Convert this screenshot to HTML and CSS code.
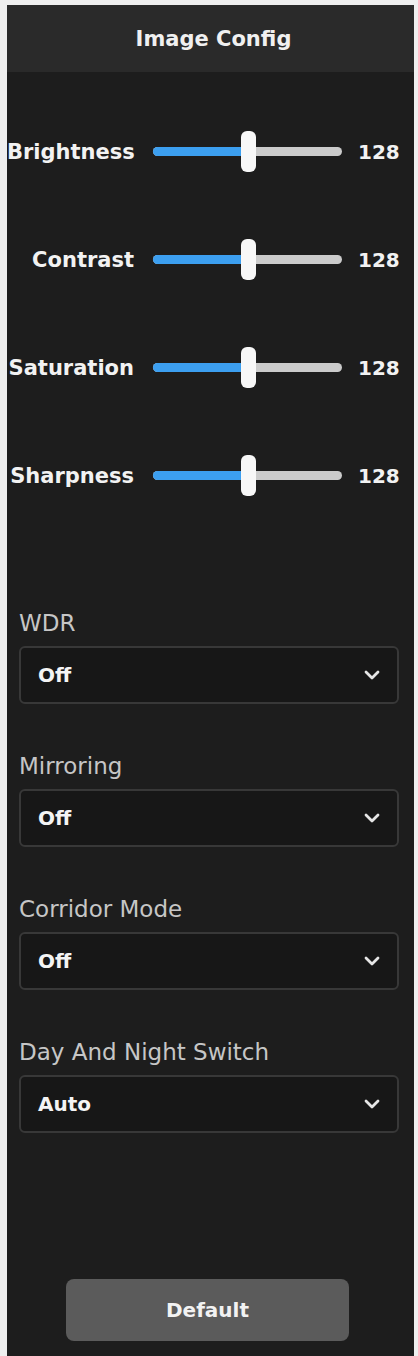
FILE: index.html
```html
<!DOCTYPE html>
<html lang="en">
<head>
    <meta charset="UTF-8">
    <meta name="viewport" content="width=device-width, initial-scale=1.0">
    <title>Image Config</title>
    <link rel="stylesheet" href="styles.css">
</head>
<body>
    <div class="panel">
        <!-- Header -->
        <div class="panel-head">
            <h1>Image Config</h1>
        </div>

        <!-- Sliders -->
        <div class="sliders">
            <div class="slider-row">
                <span class="slider-label">Brightness</span>
                <div class="track"><div class="fill" style="width: 50%"></div><div class="thumb" style="left: 50%"></div></div>
                <span class="slider-value">128</span>
            </div>
            <div class="slider-row">
                <span class="slider-label">Contrast</span>
                <div class="track"><div class="fill" style="width: 50%"></div><div class="thumb" style="left: 50%"></div></div>
                <span class="slider-value">128</span>
            </div>
            <div class="slider-row">
                <span class="slider-label">Saturation</span>
                <div class="track"><div class="fill" style="width: 50%"></div><div class="thumb" style="left: 50%"></div></div>
                <span class="slider-value">128</span>
            </div>
            <div class="slider-row">
                <span class="slider-label">Sharpness</span>
                <div class="track"><div class="fill" style="width: 50%"></div><div class="thumb" style="left: 50%"></div></div>
                <span class="slider-value">128</span>
            </div>
        </div>

        <!-- Selects -->
        <div class="fields">
            <div class="field">
                <label>WDR</label>
                <div class="select">
                    <span>Off</span>
                    <svg width="16" height="10" viewBox="0 0 16 10"><path d="M2 2 L8 8 L14 2" fill="none" stroke="#e6e6e6" stroke-width="2.8" stroke-linecap="round" stroke-linejoin="round"/></svg>
                </div>
            </div>
            <div class="field">
                <label>Mirroring</label>
                <div class="select">
                    <span>Off</span>
                    <svg width="16" height="10" viewBox="0 0 16 10"><path d="M2 2 L8 8 L14 2" fill="none" stroke="#e6e6e6" stroke-width="2.8" stroke-linecap="round" stroke-linejoin="round"/></svg>
                </div>
            </div>
            <div class="field">
                <label>Corridor Mode</label>
                <div class="select">
                    <span>Off</span>
                    <svg width="16" height="10" viewBox="0 0 16 10"><path d="M2 2 L8 8 L14 2" fill="none" stroke="#e6e6e6" stroke-width="2.8" stroke-linecap="round" stroke-linejoin="round"/></svg>
                </div>
            </div>
            <div class="field">
                <label>Day And Night Switch</label>
                <div class="select">
                    <span>Auto</span>
                    <svg width="16" height="10" viewBox="0 0 16 10"><path d="M2 2 L8 8 L14 2" fill="none" stroke="#e6e6e6" stroke-width="2.8" stroke-linecap="round" stroke-linejoin="round"/></svg>
                </div>
            </div>
        </div>

        <button class="btn-default">Default</button>
    </div>
</body>
</html>
```

FILE: styles.css
```css
/* Base */
body {
    margin: 0;
    padding: 5px 4px 0 7px;
    background: #efefef;
    font-family: "DejaVu Sans", Arial, sans-serif;
    color: #f2f2f2;
}

.panel {
    background: #1d1d1d;
    min-height: 1351px;
    display: flex;
    flex-direction: column;
}

/* Header */
.panel-head {
    height: 67px;
    background: #2a2a2a;
    display: flex;
    align-items: center;
    justify-content: center;
}

.panel-head h1 {
    margin: 0 0 0 6px;
    font-size: 21px;
    font-weight: bold;
    color: #f0f0f0;
}

/* Sliders */
.sliders {
    padding-top: 59px;
    display: flex;
    flex-direction: column;
    gap: 67px;
}

.slider-row {
    display: grid;
    grid-template-columns: 127px 189px auto;
    column-gap: 19px;
    align-items: center;
    height: 41px;
}

.slider-label {
    text-align: right;
    font-size: 21px;
    font-weight: bold;
    white-space: nowrap;
}

.slider-value {
    font-size: 20px;
    font-weight: bold;
    margin-left: -3px;
}

.track {
    position: relative;
    height: 9px;
    border-radius: 5px;
    background: #cbcbcb;
}

.fill {
    height: 100%;
    border-radius: 5px 0 0 5px;
    background: #3c9ff0;
}

.thumb {
    position: absolute;
    top: -16px;
    width: 15px;
    height: 41px;
    margin-left: -7px;
    border-radius: 6px;
    background: #f7f7f7;
}

/* Selects */
.fields {
    padding: 115px 15px 0 12px;
    display: flex;
    flex-direction: column;
    gap: 50px;
}

.field label {
    display: block;
    font-size: 23px;
    line-height: 24px;
    color: #c6c6c6;
    margin-bottom: 11px;
}

.select {
    height: 54px;
    border: 2px solid #383838;
    border-radius: 6px;
    background: #171717;
    display: flex;
    align-items: center;
    justify-content: space-between;
    padding: 0 17px 0 17px;
}

.select span {
    font-size: 20px;
    font-weight: bold;
    color: #f4f4f4;
}

/* Button */
.btn-default {
    margin: 146px 0 0 59px;
    width: 283px;
    height: 62px;
    border: none;
    border-radius: 8px;
    background: #5b5b5b;
    color: #f2f2f2;
    font-family: "DejaVu Sans", Arial, sans-serif;
    font-size: 20px;
    font-weight: bold;
    cursor: pointer;
}
```
